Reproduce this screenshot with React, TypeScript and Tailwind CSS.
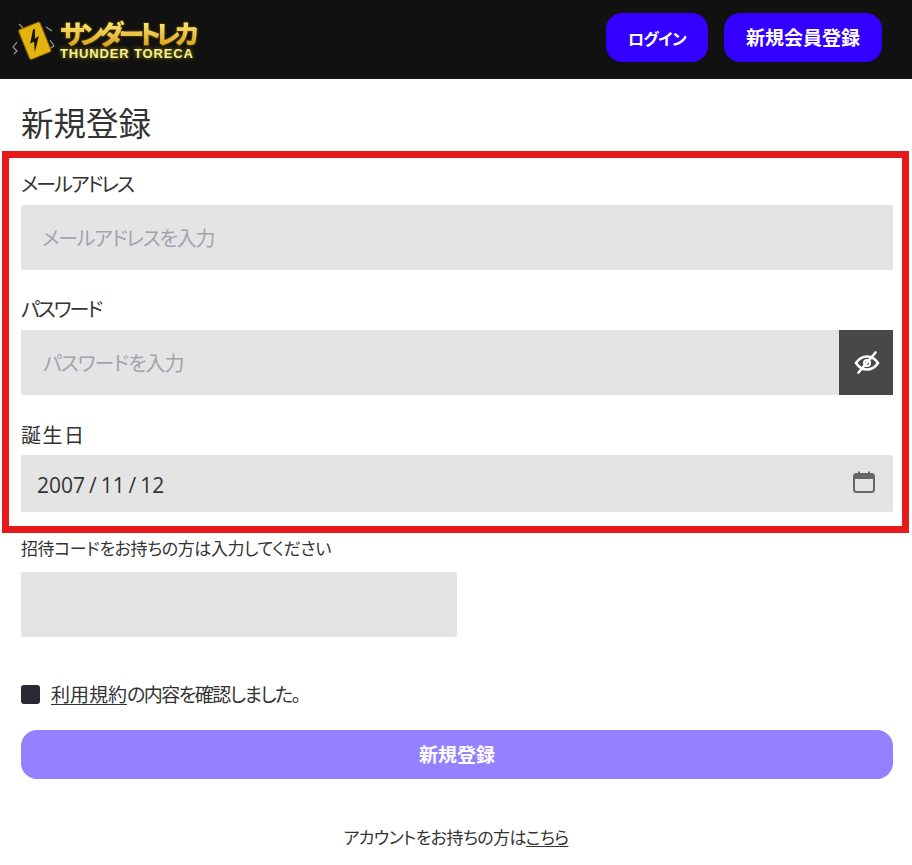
const sans = "font-['Noto_Sans_CJK_JP','Noto_Sans',sans-serif]";

function Logo() {
  return (
    <div className="flex items-center">
      <svg width="48" height="48" viewBox="0 0 48 48" className="ml-[10px] shrink-0">
        <path d="M13 12 L9 8 M7 26 L3 31 L7 35 L4 38 M36 11 L42 15 M40 24 L44 30 L39 33" stroke="#9a9a90" strokeWidth="1.2" fill="none" />
        <g transform="rotate(-22 24 24)">
          <rect x="13" y="9" width="23" height="32" rx="2" fill="#e3b40e" stroke="#8c6b00" />
          <path d="M27 14 L19 26 L23.5 25.5 L20 36 L30 22 L25.5 23 L29 14 Z" fill="#1a1405" />
        </g>
      </svg>
      <div className="ml-[2px] flex flex-col items-start">
        <span className="h-[28px] bg-gradient-to-b from-[#fff07a] to-[#d99f00] bg-clip-text pr-[6px] font-['Noto_Sans_CJK_JP',sans-serif] text-[26px] leading-[28px] font-black tracking-[-5px] text-transparent [filter:drop-shadow(0_0_1px_#8a6a00)]">
          サンダートレカ
        </span>
        <span className="font-['Liberation_Sans',sans-serif] text-[13px] leading-[14px] font-bold tracking-[0.85px] text-[#f4f19a] [text-shadow:0_0_4px_#a89500]">
          THUNDER TORECA
        </span>
      </div>
    </div>
  );
}

function EyeOff() {
  return (
    <svg width="26" height="26" viewBox="0 0 26 26" fill="none" stroke="#fff" strokeWidth="2.6" strokeLinecap="round" className="ml-[1px]">
      <path d="M2 13 C5 8.5 9 6.5 13 6.5 C17 6.5 21 8.5 24 13 C21 17.5 17 19.5 13 19.5 C9 19.5 5 17.5 2 13 Z" />
      <circle cx="13" cy="13" r="3" strokeWidth="2" />
      <path d="M21.5 2.5 L4.5 22.5" />
    </svg>
  );
}

function CalendarIcon() {
  return (
    <svg width="24" height="24" viewBox="0 0 24 24" fill="none" className="mb-[4px] shrink-0">
      <rect x="2" y="4" width="20" height="18" rx="2.5" stroke="#666" strokeWidth="2" />
      <path d="M2 5.5 a2 2 0 0 1 2 -2 h16 a2 2 0 0 1 2 2 V9 H2 Z" fill="#666" />
      <rect x="6" y="1.5" width="2" height="4" fill="#666" />
      <rect x="16" y="1.5" width="2" height="4" fill="#666" />
    </svg>
  );
}

export default function App() {
  return (
    <div className={`min-h-[865px] overflow-hidden bg-white text-[#333] [font-feature-settings:'palt'] ${sans}`}>
      <header className="flex h-[79px] justify-between bg-[#111111] pr-[30px]">
        <Logo />
        <div className="mt-[13px] flex gap-4">
          <button className="h-[49px] w-[102px] rounded-[16px] bg-[#3300ff] text-[16px] font-bold tracking-[-0.5px] text-white">
            ログイン
          </button>
          <button className="h-[49px] w-[158px] rounded-[16px] bg-[#3300ff] text-[19px] font-bold text-white">
            新規会員登録
          </button>
        </div>
      </header>

      <main>
        <h1 className="mt-[19px] ml-[21px] text-[32.5px] leading-[48px] font-normal">新規登録</h1>

        <section className="mt-[5px] mr-[3px] ml-[2px] h-[382px] border-[7px] border-[#e61a1a] pr-[9px] pl-[12px]">
          <label className="block pt-[12px] text-[20px] leading-[28px] tracking-[-2px]">メールアドレス</label>
          <input
            placeholder="メールアドレスを入力"
            className="mt-[7px] block h-[65px] w-full rounded-[2px] bg-[#e4e4e4] px-[21px] text-[20px] tracking-[-1.2px] placeholder:text-[#a3a3ad]"
          />
          <label className="mt-[25px] block text-[20px] leading-[28px] tracking-[-2px]">パスワード</label>
          <div className="mt-[7px] flex h-[65px]">
            <input
              placeholder="パスワードを入力"
              className="min-w-0 flex-1 bg-[#e4e4e4] px-[22px] text-[20px] tracking-[-1px] placeholder:text-[#a3a3ad]"
            />
            <div className="flex w-[54px] items-center justify-center bg-[#484848]">
              <EyeOff />
            </div>
          </div>
          <label className="mt-[26px] block text-[20px] leading-[28px] tracking-[1.5px]">誕生日</label>
          <div className="mt-[6px] flex h-[57px] items-center justify-between rounded-[2px] bg-[#e4e4e4] pr-[17px] pl-[16px]">
            <span className="pt-[4px] font-['Open_Sans',sans-serif] text-[21px] [word-spacing:-1.5px]">2007 / 11 / 12</span>
            <CalendarIcon />
          </div>
        </section>

        <div className="px-[21px]">
          <p className="mt-[3px] text-[17px] leading-[24px] tracking-[-0.4px]">招待コードをお持ちの方は入力してください</p>
          <div className="mt-[12px] h-[65px] w-[436px] rounded-[2px] bg-[#e4e4e4]" />

          <div className="mt-[47px] flex items-center">
            <span className="h-[19px] w-[19px] rounded-[3px] bg-[#2a2833]" />
            <p className="ml-[11px] text-[19px] leading-[20px] tracking-[-1.5px]">
              <a className="tracking-[0px] underline underline-offset-2">利用規約</a>の内容を確認しました。
            </p>
          </div>

          <button className="mt-[26px] block h-[49px] w-[872px] rounded-[16px] bg-[#9580ff] text-[19px] font-bold text-white">
            新規登録
          </button>

          <p className="mt-[44px] text-center text-[17px] leading-[28px] tracking-[-0.6px]">
            アカウントをお持ちの方は<a className="underline underline-offset-2">こちら</a>
          </p>
        </div>
      </main>
    </div>
  );
}
